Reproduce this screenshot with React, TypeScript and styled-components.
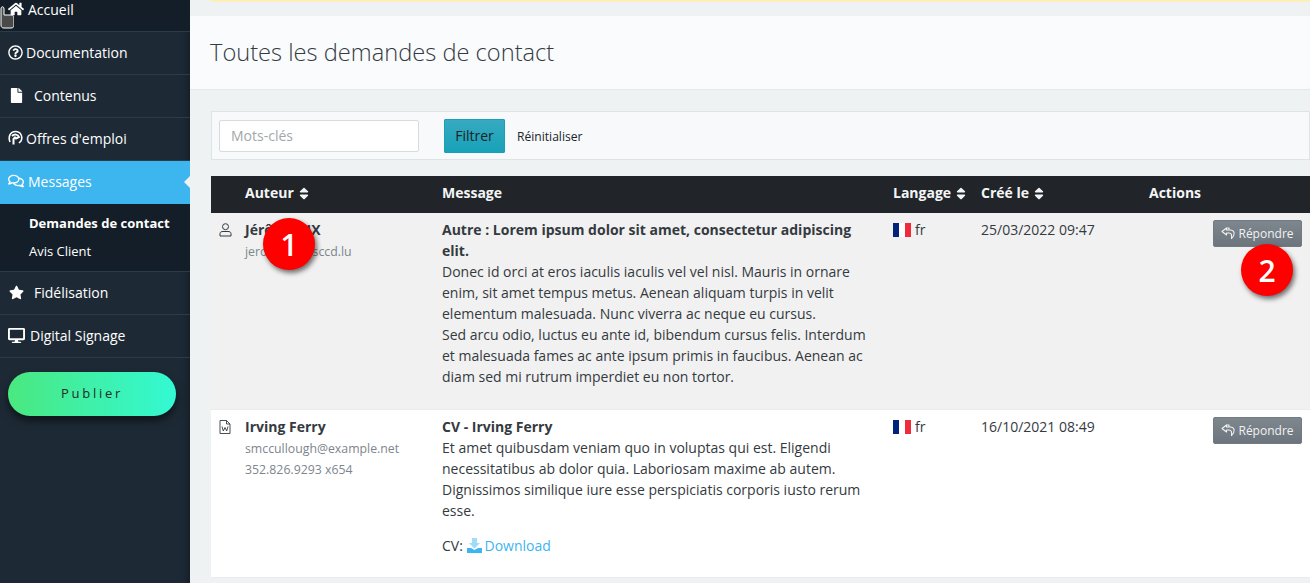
import { FC, ReactNode } from 'react';
import styled, { createGlobalStyle } from 'styled-components';
import { FaDesktop, FaFile, FaHome, FaRegComments, FaRegQuestionCircle, FaSort, FaStar } from 'react-icons/fa';

const GlobalStyle = createGlobalStyle`
  html, body {
    margin: 0;
    height: 583px;
    overflow: hidden;
    background: #eef2f3;
    font-family: 'Open Sans', 'Liberation Sans', sans-serif;
    font-size: 14px;
    line-height: 21px;
    color: #343a40;
  }
  * { box-sizing: border-box; }
`;

const Page = styled.div`
  position: relative;
  display: flex;
  width: 1310px;
  height: 583px;
  overflow: hidden;
`;

const Sidebar = styled.nav`
  flex: 0 0 190px;
  background: #1d2a36;
  box-shadow: inset -8px 0 8px -6px rgba(0, 0, 0, 0.35);
`;

const NavRow = styled.div<{ $active?: boolean; $height?: number; $gap?: number; $dark?: boolean }>`
  position: relative;
  display: flex;
  align-items: center;
  gap: ${(p) => p.$gap ?? 3}px;
  height: ${(p) => p.$height ?? 43}px;
  padding: 0 8px 2px;
  color: #fff;
  font-size: 14px;
  background: ${(p) => (p.$active ? '#3db5ef' : p.$dark ? '#141e28' : 'transparent')};
  border-bottom: 1px solid ${(p) => (p.$active ? 'transparent' : '#2a3b49')};

  svg { flex: none; }
`;

const ScrolledPart = styled.span`
  display: flex;
  align-items: center;
  gap: 4px;
  margin-top: -11px;
`;

const ActiveArrow = styled.span`
  position: absolute;
  right: 0;
  top: 15px;
  border: 6px solid transparent;
  border-right-color: #eef2f3;
  border-left-width: 0;
`;

const IndentedGlyph = styled.span`
  display: flex;
  margin-left: 1px;
`;

const SubMenu = styled.div`
  display: flex;
  flex-direction: column;
  gap: 7px;
  height: 68px;
  padding: 9px 8px 0 29px;
  background: #141e28;
  border-bottom: 1px solid #2a3b49;
  color: #fff;
  font-size: 13px;
`;

const SubItem = styled.div<{ $current?: boolean }>`
  font-weight: ${(p) => (p.$current ? 700 : 400)};
`;

const PublishButton = styled.button`
  display: block;
  width: 168px;
  height: 44px;
  margin: 14px 0 0 8px;
  padding: 0 0 2px;
  border: 0;
  border-radius: 22px;
  background: linear-gradient(90deg, #4ae87f, #33f9d4);
  box-shadow: 0 5px 8px rgba(0, 0, 0, 0.55);
  color: #1f2c28;
  font-family: inherit;
  font-size: 13px;
  letter-spacing: 2.7px;
`;

const Main = styled.main`
  flex: 1;
  min-width: 0;
`;

const AlertStrip = styled.div`
  height: 2px;
  margin-left: 21px;
  background: #fdeeba;
`;

const TitleBand = styled.header`
  display: flex;
  align-items: center;
  height: 74px;
  margin-top: 14px;
  padding: 0 20px;
  background: #f9fbfd;
  border-bottom: 1px solid #e3e8e9;
`;

const Title = styled.h1`
  margin: 0;
  font-size: 23.65px;
  font-weight: 300;
  line-height: 29px;
  color: #343a40;
`;

const Content = styled.div`
  padding: 21px 0 0 21px;
`;

const FilterBar = styled.form`
  display: flex;
  align-items: center;
  height: 49px;
  padding: 0 7px;
  background: #f7f9fa;
  border: 1px solid #dce4e5;
`;

const SearchInput = styled.input`
  width: 200px;
  height: 32px;
  padding: 0 11px;
  background: #fff;
  border: 1px solid #d3dddf;
  border-radius: 2px;
  font-family: inherit;
  font-size: 14px;

  &::placeholder { color: #a3a7aa; opacity: 1; }
`;

const FilterButton = styled.button`
  width: 61px;
  height: 34px;
  margin-left: 25px;
  border: 1px solid #1b9fb8;
  border-radius: 1px;
  background: linear-gradient(180deg, #37aac0, #17a2b8);
  color: #1c2226;
  font-family: inherit;
  font-size: 14px;
`;

const ResetLink = styled.a`
  margin: 1px 0 0 12px;
  color: #212529;
  font-size: 12.1px;
`;

const Table = styled.table`
  width: 1099px;
  margin-top: 16px;
  table-layout: fixed;
  border-collapse: collapse;
`;

const HeadCell = styled.th<{ $width: number }>`
  width: ${(p) => p.$width}px;
  height: 37px;
  padding: 0 8px 4px;
  background: #212529;
  color: #f4f5f6;
  font-size: 14px;
  font-weight: 700;
  text-align: left;
  white-space: nowrap;

  svg {
    width: 10px;
    height: 15px;
    margin-left: 5px;
    vertical-align: -3px;
  }
`;

const Row = styled.tr<{ $shaded?: boolean; $height: number }>`
  height: ${(p) => p.$height}px;
  background: ${(p) => (p.$shaded ? '#f1f1f1' : '#fff')};
  border-bottom: 1px solid #e8ecec;
`;

const Cell = styled.td`
  padding: 6px 8px;
  vertical-align: top;
`;

const IconCell = styled(Cell)`
  padding: 10px 0 0 8px;
  color: #343a40;

  svg { display: block; }
`;

const AuthorName = styled.div`
  margin-bottom: 1px;
  font-weight: 700;
`;

const Muted = styled.div`
  color: #7d868d;
  font-size: 12.3px;
`;

const Subject = styled.div`
  font-weight: 700;
`;

const Attachment = styled.p`
  margin: 14px 0 0;
`;

const DownloadLink = styled.a`
  color: #3db5ef;

  svg { vertical-align: -2px; margin: 0 2px 0 1px; }
`;

const FlagBox = styled.span`
  display: inline-flex;
  width: 18px;
  height: 14px;
  margin-right: 4px;
  vertical-align: -2px;
`;

const FlagStripe = styled.i<{ $color: string }>`
  flex: 1;
  background: ${(p) => p.$color};
`;

const ActionCell = styled(Cell)`
  padding: 7px 8px 0 0;
  text-align: right;
`;

const ReplyButton = styled.button`
  display: inline-flex;
  align-items: center;
  justify-content: center;
  gap: 2px;
  width: 89px;
  height: 27px;
  padding: 0;
  border: 1px solid #737b82;
  border-radius: 2px;
  background: linear-gradient(180deg, #7f878e, #6c757d);
  color: #f1f2f3;
  font-family: inherit;
  font-size: 12px;
`;

const Marker = styled.div<{ $x: number; $y: number }>`
  position: absolute;
  left: ${(p) => p.$x}px;
  top: ${(p) => p.$y}px;
  display: flex;
  align-items: center;
  justify-content: center;
  width: 52px;
  height: 52px;
  border-radius: 50%;
  background: #fe0000;
  box-shadow: 2px 3px 5px rgba(0, 0, 0, 0.55);
  color: #fff;
  font-size: 30px;
  font-weight: 600;
`;

const CursorMark = styled.svg`
  position: absolute;
  left: 0;
  top: 6px;
`;

const HeadsetIcon: FC = () => (
  <svg width="15" height="17" viewBox="0 0 15 17" fill="none" stroke="#fff">
    <path d="M2 12 C0 7 2 1.500 7.500 1.500 C13 1.500 15 7 13 11 L11 13" strokeWidth="1.600" />
    <path d="M4 6 C6 4 10 4 11 7 L8 8.500 L7 7.500 L5.500 9 L5.500 14.500" strokeWidth="2" />
  </svg>
);

const ReplyIcon: FC = () => (
  <svg width="15" height="13" viewBox="0 0 15 13" fill="none" stroke="#f1f2f3" strokeWidth="1.100" strokeLinejoin="round">
    <path d="M5.500 1 L1 4.500 L5.500 8 V6 H8 C10.500 6 11 8 10.500 11.500 C14 8.500 14.500 3 9 3 H5.500 Z" />
    <path d="M8 3 V1 L5.500 1" />
  </svg>
);

const DownloadIcon: FC = () => (
  <svg width="15" height="15" viewBox="0 0 15 15">
    <path d="M5 0 H10 V5 H13 L7.500 10.500 L2 5 H5 Z" fill="#9edcf8" />
    <path d="M0 10 H4 L7.500 12 L11 10 H15 V15 H0 Z" fill="#3db5ef" />
  </svg>
);

const UserIcon: FC = () => (
  <svg width="13" height="14" viewBox="0 0 13 14" fill="none" stroke="#343a40" strokeWidth="1">
    <circle cx="6.500" cy="3.700" r="3" />
    <path d="M1 13 V10.500 C1 9 2.500 8.500 4 8.500 H9 C10.500 8.500 12 9 12 10.500 V13 Z" />
  </svg>
);

const WordFileIcon: FC = () => (
  <svg width="12" height="14" viewBox="0 0 12 14" fill="none" stroke="#343a40" strokeWidth="0.900">
    <path d="M1 .5 H7.500 L11 4 V13.500 H1 Z" />
    <path d="M7.500 .5 V4 H11" />
    <path d="M3 6.500 L4.300 11 L6 7.500 L7.700 11 L9 6.500" />
  </svg>
);

const Flag: FC = () => (
  <FlagBox>
    <FlagStripe $color="#00247d" />
    <FlagStripe $color="#fff" />
    <FlagStripe $color="#ef2b3c" />
  </FlagBox>
);

const SortableHead: FC<{ width: number; children: ReactNode }> = ({ width, children }) => (
  <HeadCell $width={width}>
    {children}
    <FaSort />
  </HeadCell>
);

const Reply: FC = () => (
  <ReplyButton type="button">
    <ReplyIcon />
    Répondre
  </ReplyButton>
);

const App: FC = () => (
  <>
    <GlobalStyle />
    <Page>
      <Sidebar>
        <NavRow $height={32} $dark>
          <ScrolledPart>
            <FaHome size={16} />
            Accueil
          </ScrolledPart>
        </NavRow>
        <NavRow>
          <FaRegQuestionCircle size={15} />
          Documentation
        </NavRow>
        <NavRow $gap={10}>
          <IndentedGlyph><FaFile size={15} /></IndentedGlyph>
          Contenus
        </NavRow>
        <NavRow>
          <HeadsetIcon />
          Offres d'emploi
        </NavRow>
        <NavRow $active $gap={4}>
          <FaRegComments size={16} />
          Messages
          <ActiveArrow />
        </NavRow>
        <SubMenu>
          <SubItem $current>Demandes de contact</SubItem>
          <SubItem>Avis Client</SubItem>
        </SubMenu>
        <NavRow $gap={10}>
          <IndentedGlyph><FaStar size={15} /></IndentedGlyph>
          Fidélisation
        </NavRow>
        <NavRow $gap={5}>
          <FaDesktop size={17} />
          Digital Signage
        </NavRow>
        <PublishButton type="button">Publier</PublishButton>
      </Sidebar>
      <Main>
        <AlertStrip />
        <TitleBand>
          <Title>Toutes les demandes de contact</Title>
        </TitleBand>
        <Content>
          <FilterBar>
            <SearchInput placeholder="Mots-clés" />
            <FilterButton type="button">Filtrer</FilterButton>
            <ResetLink>Réinitialiser</ResetLink>
          </FilterBar>
          <Table>
            <thead>
              <tr>
                <HeadCell $width={26} />
                <SortableHead width={197}>Auteur</SortableHead>
                <HeadCell $width={451}>Message</HeadCell>
                <SortableHead width={88}>Langage</SortableHead>
                <SortableHead width={168}>Créé le</SortableHead>
                <HeadCell $width={169}>Actions</HeadCell>
              </tr>
            </thead>
            <tbody>
              <Row $shaded $height={196}>
                <IconCell><UserIcon /></IconCell>
                <Cell>
                  <AuthorName>Jérôme LIX</AuthorName>
                  <Muted>jerome.lix@sccd.lu</Muted>
                </Cell>
                <Cell>
                  <Subject>Autre : Lorem ipsum dolor sit amet, consectetur adipiscing elit.</Subject>
                  Donec id orci at eros iaculis iaculis vel vel nisl. Mauris in ornare enim, sit amet tempus metus. Aenean aliquam turpis in velit elementum malesuada. Nunc viverra ac neque eu cursus.
                  <br />
                  Sed arcu odio, luctus eu ante id, bibendum cursus felis. Interdum et malesuada fames ac ante ipsum primis in faucibus. Aenean ac diam sed mi rutrum imperdiet eu non tortor.
                </Cell>
                <Cell><Flag />fr</Cell>
                <Cell>25/03/2022 09:47</Cell>
                <ActionCell><Reply /></ActionCell>
              </Row>
              <Row $height={168}>
                <IconCell><WordFileIcon /></IconCell>
                <Cell>
                  <AuthorName>Irving Ferry</AuthorName>
                  <Muted>smccullough@example.net</Muted>
                  <Muted>352.826.9293 x654</Muted>
                </Cell>
                <Cell>
                  <Subject>CV - Irving Ferry</Subject>
                  Et amet quibusdam veniam quo in voluptas qui est. Eligendi necessitatibus ab dolor quia. Laboriosam maxime ab autem. Dignissimos similique iure esse perspiciatis corporis iusto rerum esse.
                  <Attachment>
                    CV: <DownloadLink><DownloadIcon />Download</DownloadLink>
                  </Attachment>
                </Cell>
                <Cell><Flag />fr</Cell>
                <Cell>16/10/2021 08:49</Cell>
                <ActionCell><Reply /></ActionCell>
              </Row>
            </tbody>
          </Table>
        </Content>
      </Main>
      <Marker $x={263} $y={218}>1</Marker>
      <Marker $x={1241} $y={244}>2</Marker>
      <CursorMark width="14" height="23" viewBox="0 0 14 23">
        <path d="M1 3 C1 0 4 0 4 3 V9 H11 C13 9 14 10 14 12 V19 C14 21 13 22 11 22 H4 C2 22 1 21 1 19 Z" fill="#4a4a4a" stroke="#fff" />
      </CursorMark>
    </Page>
  </>
);

export default App;
